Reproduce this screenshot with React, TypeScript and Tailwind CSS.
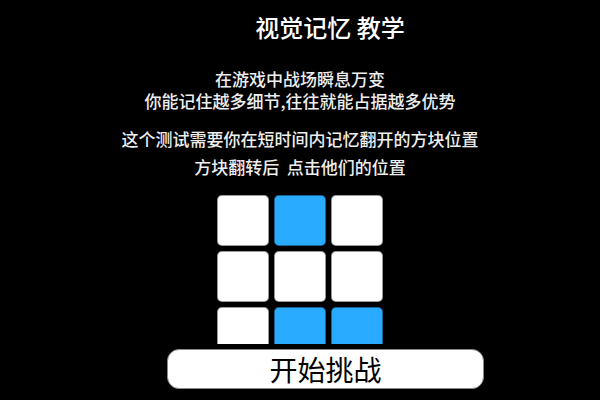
import React from 'react';

const tiles = [false, true, false, false, false, false, false, true, true];

const App: React.FC = () => {
  return (
    <div
      className="w-[600px] h-[400px] bg-black overflow-hidden flex flex-col items-center"
      style={{ fontFamily: '"Noto Sans CJK SC", "Noto Sans", sans-serif' }}
    >
      <h1 className="mt-[12px] pl-[60px] text-[24px] leading-[30px] text-white font-medium">视觉记忆 教学</h1>

      <div className="mt-[26px] text-center text-[17px] text-[#eeeeee] font-medium">
        <p className="leading-[22px]">在游戏中战场瞬息万变</p>
        <p className="leading-[22px]">你能记住越多细节,往往就能占据越多优势</p>
        <p className="mt-[16px] leading-[22px]">这个测试需要你在短时间内记忆翻开的方块位置</p>
        <p className="mt-[6px] leading-[22px]">方块翻转后&nbsp;&nbsp;点击他们的位置</p>
      </div>

      <div className="mt-[17px] h-[149px] overflow-hidden">
        <div className="grid grid-cols-[repeat(3,52px)] gap-[5px]">
          {tiles.map((on, i) => (
            <div
              key={i}
              className={`h-[51px] rounded-[5px] border border-black/40 ${on ? 'bg-[#29abff]' : 'bg-white'}`}
            />
          ))}
        </div>
      </div>

      <button className="mt-[5px] ml-[51px] w-[317px] h-[40px] rounded-[12px] bg-white border border-[#8a8a8a] text-black text-[28px] font-normal leading-none flex items-center justify-center">
        开始挑战
      </button>
    </div>
  );
};

export default App;
